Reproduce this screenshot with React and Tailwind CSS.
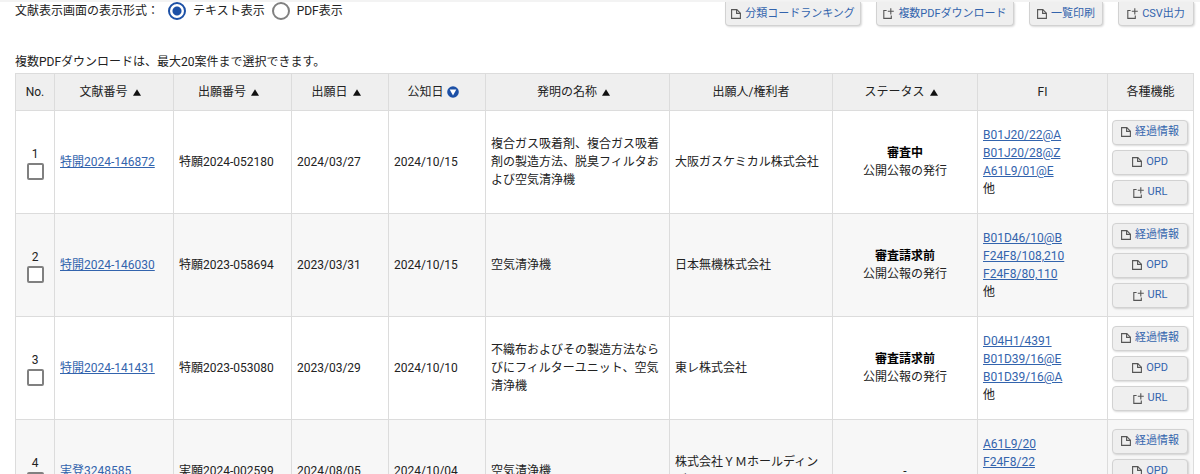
const FONT = "font-['Roboto','Noto_Sans_CJK_JP',sans-serif]";

const rows = [
  {
    no: 1, doc: "特開2024-146872", app: "特願2024-052180", filed: "2024/03/27", published: "2024/10/15",
    title: "複合ガス吸着剤、複合ガス吸着剤の製造方法、脱臭フィルタおよび空気清浄機",
    applicant: "大阪ガスケミカル株式会社", status: "審査中", stage: "公開公報の発行",
    fi: ["B01J20/22@A", "B01J20/28@Z", "A61L9/01@E"],
  },
  {
    no: 2, doc: "特開2024-146030", app: "特願2023-058694", filed: "2023/03/31", published: "2024/10/15",
    title: "空気清浄機",
    applicant: "日本無機株式会社", status: "審査請求前", stage: "公開公報の発行",
    fi: ["B01D46/10@B", "F24F8/108,210", "F24F8/80,110"],
  },
  {
    no: 3, doc: "特開2024-141431", app: "特願2023-053080", filed: "2023/03/29", published: "2024/10/10",
    title: "不織布およびその製造方法ならびにフィルターユニット、空気清浄機",
    applicant: "東レ株式会社", status: "審査請求前", stage: "公開公報の発行",
    fi: ["D04H1/4391", "B01D39/16@E", "B01D39/16@A"],
  },
  {
    no: 4, doc: "実登3248585", app: "実願2024-002599", filed: "2024/08/05", published: "2024/10/04",
    title: "空気清浄機",
    applicant: "株式会社ＹＭホールディングス", status: "", stage: "-",
    fi: ["A61L9/20", "F24F8/22", "F24F8/80"],
  },
];

const columns = [
  { label: "No.", width: "w-[39px]" },
  { label: "文献番号", width: "w-[119px]", sort: "asc" },
  { label: "出願番号", width: "w-[118px]", sort: "asc" },
  { label: "出願日", width: "w-[97px]", sort: "asc" },
  { label: "公知日", width: "w-[97px]", sort: "active" },
  { label: "発明の名称", width: "w-auto", sort: "asc" },
  { label: "出願人/権利者", width: "w-[163px]" },
  { label: "ステータス", width: "w-[145px]", sort: "asc" },
  { label: "FI", width: "w-[130px]" },
  { label: "各種機能", width: "w-[86px]" },
];

function FileIcon() {
  return (
    <svg viewBox="0 0 10 10" className="h-[10px] w-[10px] shrink-0" fill="none" stroke="#555" strokeWidth="1.1" aria-hidden="true">
      <path d="M0.6 0.6H5.8L9.4 4.2V9.4H0.6Z" />
      <path d="M5.6 0.6V4.4H9.4" />
    </svg>
  );
}

function OpenIcon() {
  return (
    <svg viewBox="0 0 11 11" className="h-[11px] w-[11px] shrink-0" fill="none" stroke="#555" strokeWidth="1.1" aria-hidden="true">
      <path d="M3.6 2.5H0.8V10.4H8.3V7.4" />
      <path d="M7.8 0.2V6.4M4.8 3.3H10.8" />
    </svg>
  );
}

function ToolButton({ icon, children, className }) {
  return (
    <button
      type="button"
      className={`flex items-center justify-center gap-1 whitespace-nowrap border-[#d2d2d2] bg-[#efefef] text-[11px] leading-4 text-[#3364ad] shadow-[1px_1px_2px_rgba(0,0,0,0.15)] ${className}`}
    >
      {icon === "file" ? <FileIcon /> : <OpenIcon />}
      {children}
    </button>
  );
}

const topButton = "h-6 rounded-b border-x border-b";
const rowButton = "h-[25px] w-full rounded border";

function SortMark({ kind }) {
  if (kind === "asc") {
    return (
      <svg viewBox="0 0 8 7" className="h-[7px] w-2" aria-hidden="true">
        <path d="M4 0.3L8 6.7H0Z" fill="#111" />
      </svg>
    );
  }
  return (
    <svg viewBox="0 0 12 12" className="-ml-0.5 h-3 w-3" aria-hidden="true">
      <circle cx="6" cy="6" r="5.8" fill="#1c50a6" />
      <path d="M2.7 3.6H9.3L6 9.4Z" fill="#fff" />
    </svg>
  );
}

function Radio({ label, ...props }) {
  return (
    <label className="flex items-center gap-[7px]">
      <input
        type="radio"
        name="format"
        className="h-[18px] w-[18px] appearance-none rounded-full border-2 border-[#808080] bg-white checked:border-[#1c50a6] checked:bg-[radial-gradient(circle,#1c50a6_4px,white_5px)]"
        {...props}
      />
      {label}
    </label>
  );
}

const link = "text-[#3364ad] underline";
const cell = "border border-[#dcdcdc] px-[5px]";

export default function App() {
  return (
    <div className={`h-screen overflow-hidden bg-white text-xs leading-[18px] text-[#222] ${FONT}`}>
      <div className="h-0.5 bg-[#f3f3f3]" />
      <main className="pl-[15px] pr-[6px]">
        <div className="flex items-start justify-between">
          <fieldset className="flex items-center gap-[7px]">
            <legend className="float-left mr-0.5">文献表示画面の表示形式：</legend>
            <Radio label="テキスト表示" defaultChecked />
            <Radio label="PDF表示" />
          </fieldset>
          <div className="flex gap-[15px]">
            <ToolButton icon="file" className={`${topButton} w-[136px]`}>分類コードランキング</ToolButton>
            <ToolButton icon="open" className={`${topButton} w-[138px]`}>複数PDFダウンロード</ToolButton>
            <ToolButton icon="file" className={`${topButton} w-[74px]`}>一覧印刷</ToolButton>
            <ToolButton icon="open" className={`${topButton} w-[76px]`}>CSV出力</ToolButton>
          </div>
        </div>
        <p className="mt-[27px] pb-[2px]">複数PDFダウンロードは、最大20案件まで選択できます。</p>
        <table className="w-full table-fixed border-collapse">
          <thead>
            <tr className="h-[37px] bg-[#efefef]">
              {columns.map((c) => (
                <th key={c.label} scope="col" className={`border border-[#dcdcdc] p-0 font-normal ${c.width}`}>
                  <span className={`flex items-center justify-center gap-[5px] ${c.sort ? "pr-2" : ""}`}>
                    {c.label}
                    {c.sort && <SortMark kind={c.sort} />}
                  </span>
                </th>
              ))}
            </tr>
          </thead>
          <tbody>
            {rows.map((r) => (
              <tr key={r.no} className="h-[103px] even:bg-[#f7f7f7]">
                <td className={cell}>
                  <label className="flex flex-col items-center">
                    {r.no}
                    <input type="checkbox" className="h-[17px] w-[17px] appearance-none rounded-xs border-2 border-[#808080] bg-white" />
                  </label>
                </td>
                <td className={cell}><a href="#" className={link}>{r.doc}</a></td>
                <td className={cell}>{r.app}</td>
                <td className={cell}>{r.filed}</td>
                <td className={cell}>{r.published}</td>
                <td className={cell}>{r.title}</td>
                <td className={cell}>{r.applicant}</td>
                <td className={`${cell} text-center`}>
                  {r.status && <strong className="block font-bold text-black">{r.status}</strong>}
                  {r.stage}
                </td>
                <td className={cell}>
                  {r.fi.map((code) => (
                    <div key={code}><a href="#" className={link}>{code}</a></div>
                  ))}
                  他
                </td>
                <td className="border border-[#dcdcdc] pl-1 pr-[5px]">
                  <div className="flex flex-col gap-[5px]">
                    <ToolButton icon="file" className={rowButton}>経過情報</ToolButton>
                    <ToolButton icon="file" className={rowButton}>OPD</ToolButton>
                    <ToolButton icon="open" className={rowButton}>URL</ToolButton>
                  </div>
                </td>
              </tr>
            ))}
          </tbody>
        </table>
      </main>
    </div>
  );
}
